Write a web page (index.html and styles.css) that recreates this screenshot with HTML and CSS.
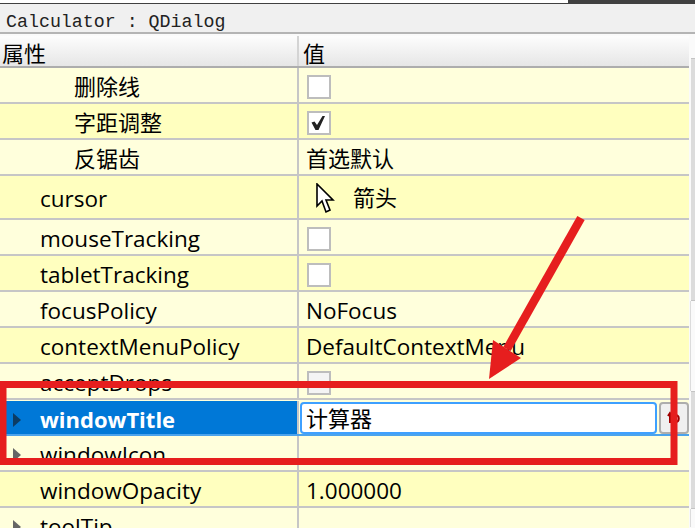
FILE: index.html
```html
<!DOCTYPE html>
<html lang="zh-CN">
<head>
<meta charset="utf-8">
<title>Calculator : QDialog</title>
<link rel="stylesheet" href="styles.css">
</head>
<body>
<div class="topbar"><div class="topbar-light"></div></div>
<div class="objectbar">Calculator : QDialog</div>
<div class="panel">
  <div class="table">
    <div class="head cjk">
      <div class="head-name">属性</div>
      <div class="head-value">值</div>
    </div>
    <div class="row light"><div class="name sub cjk">删除线</div><div class="value box"><span class="check"></span></div></div>
    <div class="row dark"><div class="name sub cjk">字距调整</div><div class="value box"><span class="check"><svg width="20" height="20" viewBox="0 0 20 20"><path d="M2.500 9.500 L5.500 8.500 L8 12 L13.500 3 L16 3 L9.500 17 L6.500 17 Z" fill="#222"/></svg></span></div></div>
    <div class="row light"><div class="name sub cjk">反锯齿</div><div class="value box cjk">首选默认</div></div>
    <div class="row dark tall"><div class="name">cursor</div><div class="value cursor-value cjk"><svg class="cursor-icon" width="19" height="31" viewBox="0 0 19 31"><path d="M1 1 V23 L6 18 L10 29 L14 27 L10 17 L17 17 Z" fill="#fff" stroke="#000" stroke-width="1.600"/></svg><span>箭头</span></div></div>
    <div class="row light"><div class="name">mouseTracking</div><div class="value box"><span class="check"></span></div></div>
    <div class="row dark"><div class="name">tabletTracking</div><div class="value box"><span class="check"></span></div></div>
    <div class="row light"><div class="name">focusPolicy</div><div class="value">NoFocus</div></div>
    <div class="row dark"><div class="name">contextMenuPolicy</div><div class="value">DefaultContextMenu</div></div>
    <div class="row light"><div class="name">acceptDrops</div><div class="value box"><span class="check off"></span></div></div>
    <div class="row selected">
      <div class="name"><span class="tri tri-sel"></span>windowTitle</div>
      <div class="value editor-cell">
        <div class="editor cjk">计算器</div>
        <div class="reset"><svg width="14" height="14" viewBox="0 0 14 14"><path d="M3 3 V12 M1 5 L3 2 L5 5 M8 11 C13 11 13 4 8 4" fill="none" stroke="#a00000" stroke-width="2"/></svg></div>
      </div>
    </div>
    <div class="row light"><div class="name"><span class="tri"></span>windowIcon</div><div class="value"></div></div>
    <div class="row dark"><div class="name">windowOpacity</div><div class="value">1.000000</div></div>
    <div class="row light"><div class="name"><span class="tri"></span>toolTip</div><div class="value"></div></div>
  </div>
  <div class="scroll">
    <div class="thumb thumb-a"></div>
    <div class="track track-a"></div>
    <div class="thumb thumb-b"></div>
    <div class="track track-b"></div>
  </div>
</div>
<svg class="annotation" width="695" height="528" viewBox="0 0 695 528">
  <rect x="3" y="384.500" width="671" height="77" fill="none" stroke="#e61e1e" stroke-width="7"/>
  <path d="M581 218 L507 349" fill="none" stroke="#e61e1e" stroke-width="8.500"/>
  <path d="M489 379 L493 340 L521 358 Z" fill="#e61e1e"/>
</svg>
</body>
</html>
```

FILE: styles.css
```css
html, body {
  margin: 0;
  padding: 0;
  height: 528px;
  overflow: hidden;
  background: #f0f0f0;
}
body {
  position: relative;
  font-family: "Open Sans", "Noto Sans CJK SC", sans-serif;
  font-size: 22.500px;
  color: #000;
}
.topbar {
  height: 4px;
  background: #404040;
}
.topbar-light {
  width: 568px;
  height: 3px;
  background: #fff;
}
.objectbar {
  height: 28px;
  padding-left: 6px;
  background: #f0f0f0;
  border-bottom: 2px solid #b4b4b4;
  font-family: "Liberation Mono", monospace;
  font-size: 18.300px;
  line-height: 36px;
  color: #222;
}
.panel {
  display: flex;
  padding-top: 2px;
  background: #fafafa;
}
.table {
  width: 690px;
}
.scroll {
  flex: 1;
  margin-top: 22px;
  height: 470px;
}
.thumb {
  background: #dcdcdc;
  border-top: 1px solid #c4c4c4;
  border-bottom: 1px solid #c4c4c4;
  margin-left: 1px;
}
.thumb-a { height: 241px; }
.thumb-b { height: 116px; }
.track {
  background: #fafafa;
  border-left: 1px solid #dcdcdc;
}
.track-a { height: 90px; }
.track-b { height: 18px; }
.head {
  display: flex;
  height: 30px;
  background: linear-gradient(#fdfdfd, #e6e6e6);
  border-bottom: 2px solid #adadad;
  line-height: 34px;
  margin-right: 1px;
}
.head-name {
  width: 295px;
  padding-left: 2px;
  border-right: 2px solid #d4d4d4;
}
.head-value {
  flex: 1;
  padding-left: 4px;
}
.row {
  display: flex;
  height: 34px;
  border-bottom: 2px solid #c6c6c6;
  margin-right: 1px;
  line-height: 38px;
}
.row.tall {
  height: 42px;
  line-height: 46px;
}
.light { background: #ffffdc; }
.dark { background: #ffffbf; }
.name {
  position: relative;
  width: 257px;
  padding-left: 40px;
  border-right: 2px solid #c6c6c6;
  white-space: nowrap;
  overflow: hidden;
}
.name.sub {
  width: 223px;
  padding-left: 74px;
  line-height: 36px;
}
.value {
  flex: 1;
  padding-left: 7px;
  padding-top: 4px;
  display: flex;
  align-items: center;
}
.value.box {
  padding-top: 2px;
  line-height: 36px;
}
.check {
  box-sizing: border-box;
  width: 24px;
  height: 24px;
  border: 2px solid #bdbdbd;
  background: #fff;
  margin-left: 1px;
  margin-top: 2px;
  display: flex;
  align-items: center;
  justify-content: center;
}
.check.off {
  background: #f4f4f4;
}
.cursor-value {
  padding-left: 17px;
  padding-top: 0;
}
.cursor-icon {
  margin-right: 18px;
  margin-top: 2px;
}
.tri {
  position: absolute;
  left: 13px;
  top: 12px;
  width: 0;
  height: 0;
  border-left: 8px solid #666;
  border-top: 7px solid transparent;
  border-bottom: 7px solid transparent;
}
.tri-sel {
  border-left-color: #0c3c64;
}
.row.selected {
  height: 33px;
  background: #0078d7;
  border-top: 1px solid #ffffdc;
  border-bottom-color: #4ba3ec;
}
.selected .name {
  color: #fff;
  font-size: 22px;
  font-weight: 700;
  line-height: 36px;
}
.selected .value {
  background: #ffffdc;
  padding-left: 1px;
  gap: 2px;
  align-items: flex-start;
  padding-top: 1px;
  height: 32px;
}
.editor {
  box-sizing: border-box;
  width: 357px;
  height: 32px;
  border: 2px solid #3ea0ff;
  border-radius: 4px;
  background: #fff;
  padding-left: 4px;
  line-height: 29px;
}
.reset {
  box-sizing: border-box;
  width: 30px;
  height: 32px;
  border: 2px solid #adadad;
  border-radius: 4px;
  background: #f0f0f0;
  display: flex;
  align-items: center;
  justify-content: center;
}
.annotation {
  position: absolute;
  left: 0;
  top: 0;
}
.cjk {
  font-size: 22px;
}
```
